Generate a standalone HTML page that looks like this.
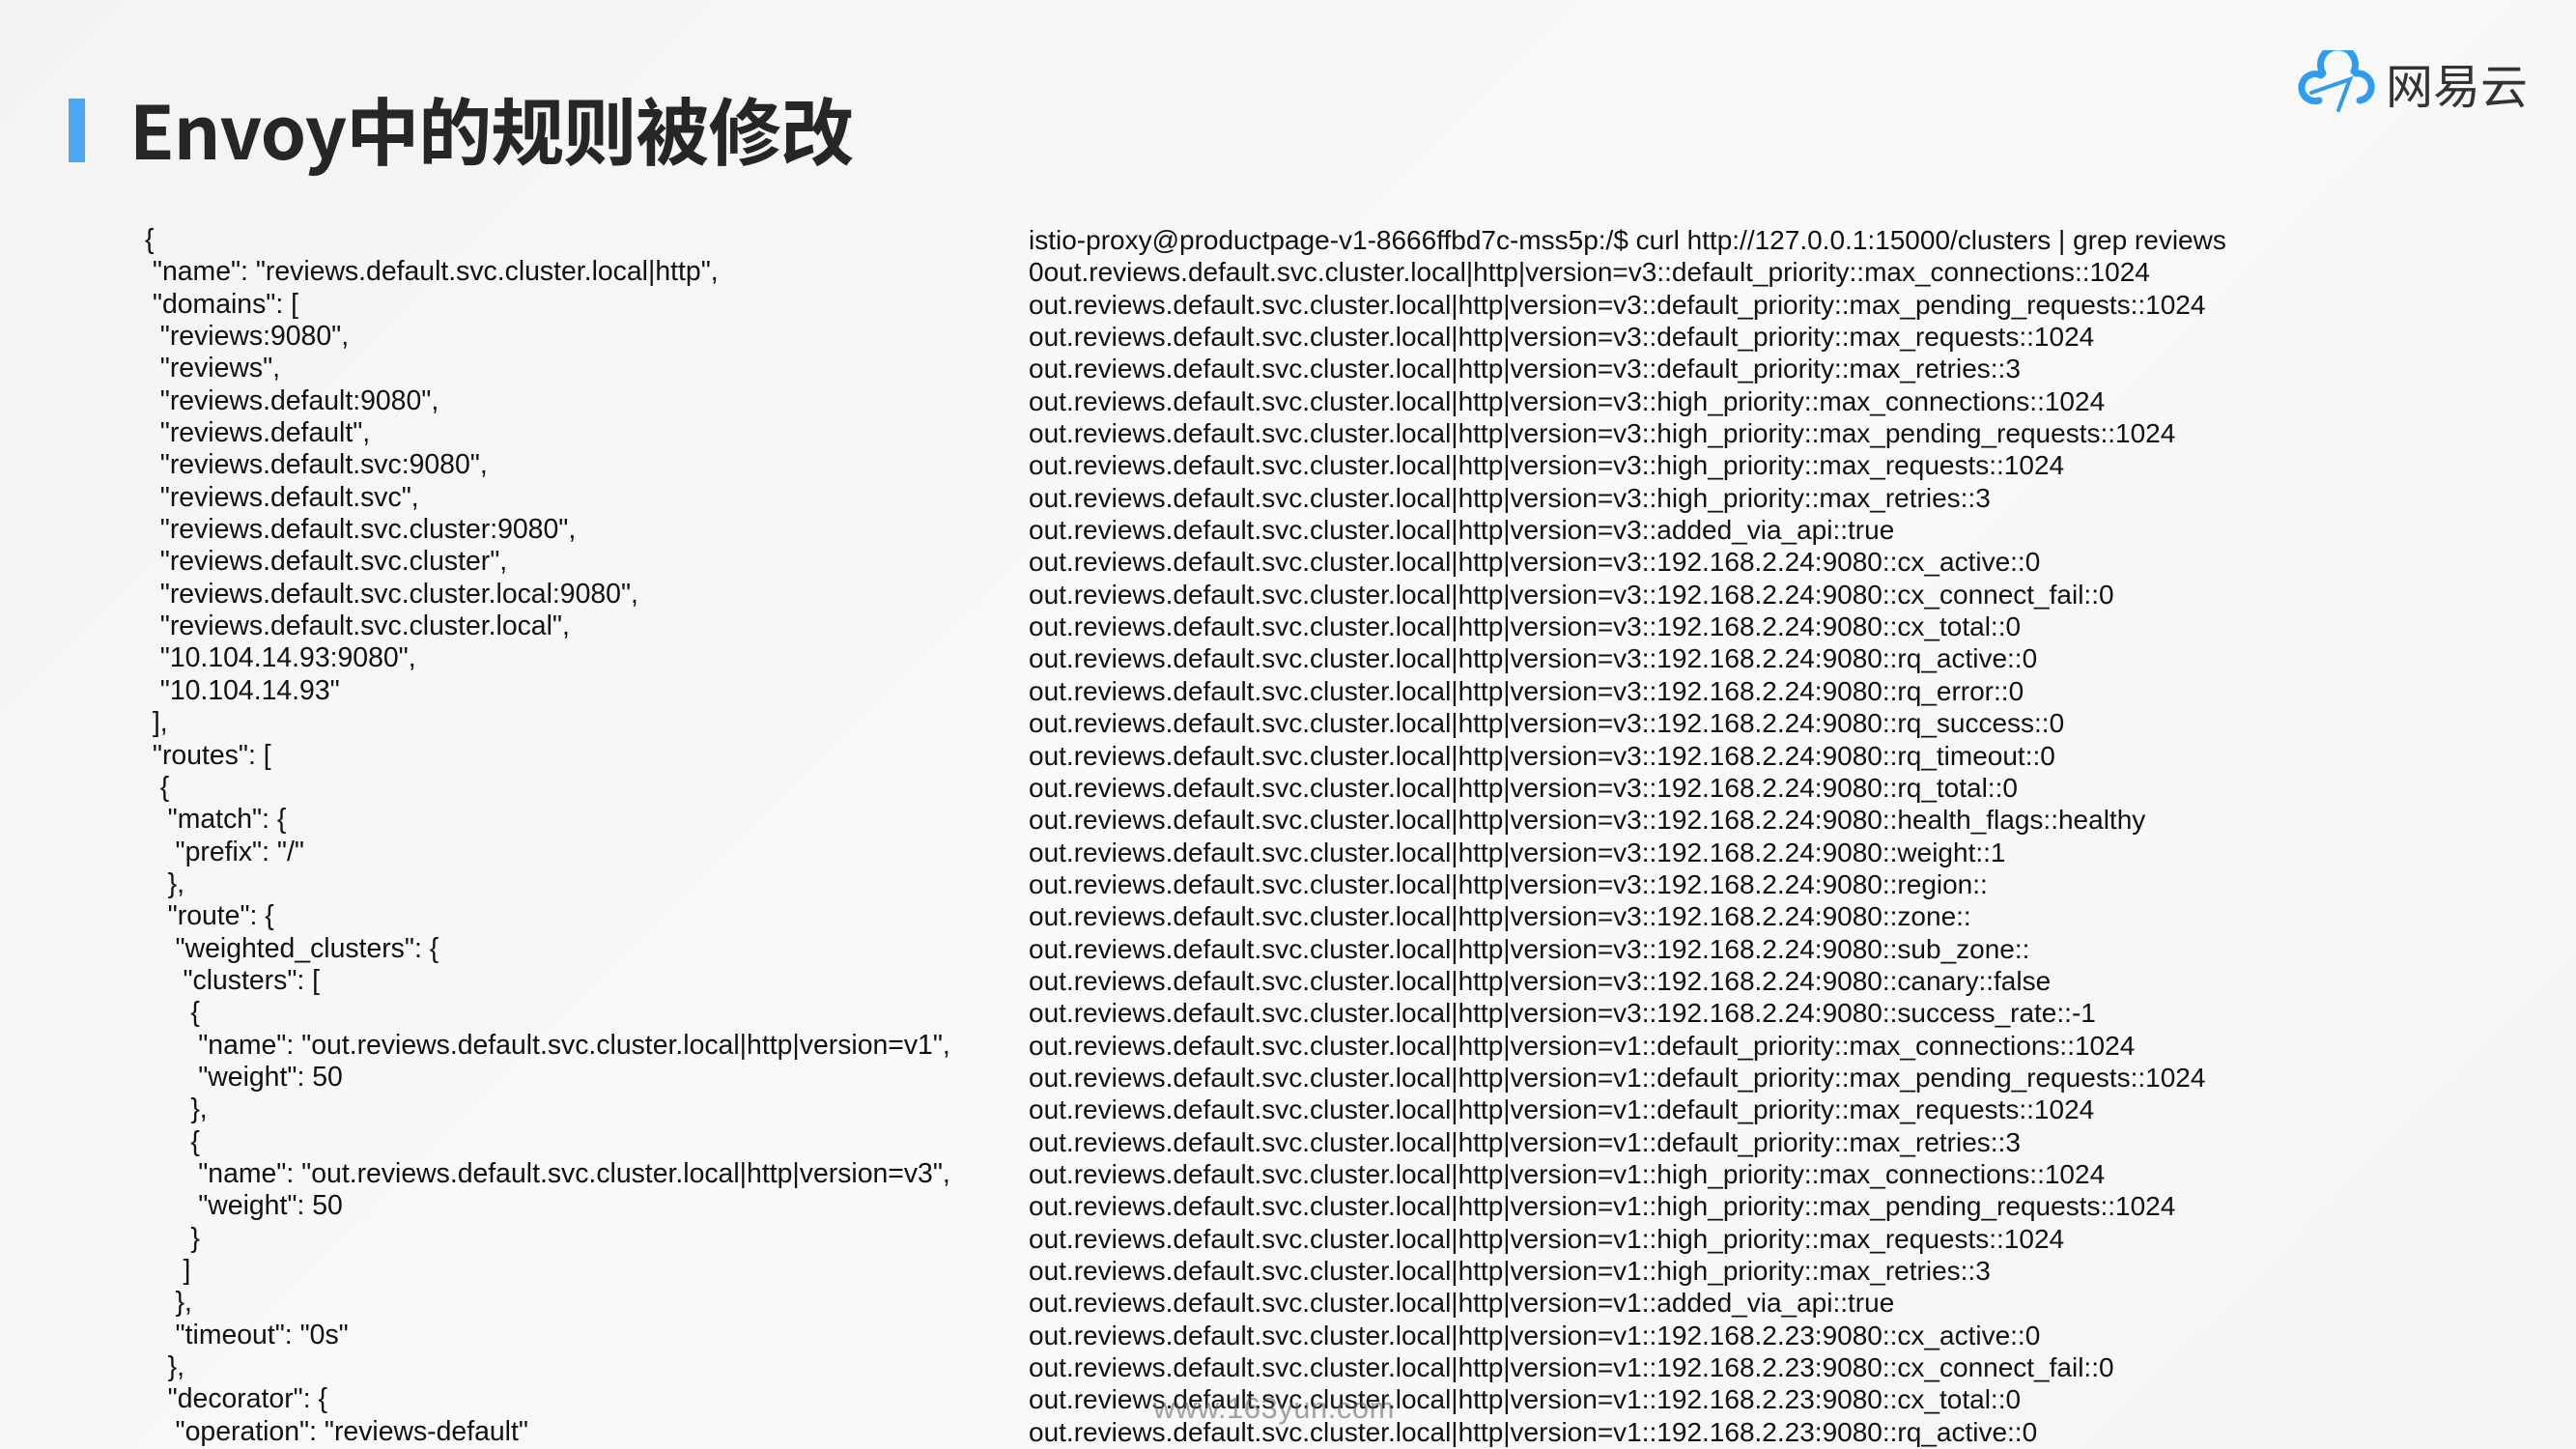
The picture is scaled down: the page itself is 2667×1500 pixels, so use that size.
<!DOCTYPE html>
<html><head><meta charset="utf-8"><style>
html,body{margin:0;padding:0}
body{width:2667px;height:1500px;overflow:hidden;position:relative;background:linear-gradient(135deg,#f3f3f3 0%,#fafafa 50%,#f4f4f4 100%);font-family:"Liberation Sans","Noto Sans CJK SC",sans-serif;color:#111}
.bar{position:absolute;left:71px;top:102px;width:17px;height:66px;background:#4ea7f5}
.title{position:absolute;left:134px;top:82px;font-size:76px;font-weight:bold;font-family:"Noto Sans CJK SC",sans-serif;color:#262626;line-height:100px;letter-spacing:-1px}
.left{position:absolute;left:150px;top:232px;font-size:28.4px;line-height:33.35px;white-space:pre}
.left div{height:33.35px}
.right{position:absolute;left:1065px;top:232px;font-size:28px;line-height:33.35px;white-space:pre}
.right div{height:33.35px}
.wm{position:absolute;left:1194px;top:1440px;font-size:31px;color:rgba(90,90,90,0.55);letter-spacing:0.5px}
.logo{position:absolute;left:2375px;top:52px}
.logotext{position:absolute;left:2470px;top:52px;font-size:49px;font-family:"Noto Sans CJK SC",sans-serif;color:#333;line-height:70px}
</style></head><body>
<div class="bar"></div>
<div class="title">Envoy中的规则被修改</div>
<svg class="logo" width="95" height="70" viewBox="0 0 95 70">
<g fill="none" stroke="#2f9cf0" stroke-width="7" stroke-linecap="round">
<path d="M30 24 A18 18 0 1 1 62 22"/>
<path d="M28 26 A14 14 0 1 0 26 52"/>
<path d="M64 24 A14 14 0 1 1 68 52"/>
<path d="M18 44 L58 30 L46 62" stroke-width="4"/>
</g></svg>
<div class="logotext">网易云</div>
<div class="left"><div>{</div><div> "name": "reviews.default.svc.cluster.local|http",</div><div> "domains": [</div><div>  "reviews:9080",</div><div>  "reviews",</div><div>  "reviews.default:9080",</div><div>  "reviews.default",</div><div>  "reviews.default.svc:9080",</div><div>  "reviews.default.svc",</div><div>  "reviews.default.svc.cluster:9080",</div><div>  "reviews.default.svc.cluster",</div><div>  "reviews.default.svc.cluster.local:9080",</div><div>  "reviews.default.svc.cluster.local",</div><div>  "10.104.14.93:9080",</div><div>  "10.104.14.93"</div><div> ],</div><div> "routes": [</div><div>  {</div><div>   "match": {</div><div>    "prefix": "/"</div><div>   },</div><div>   "route": {</div><div>    "weighted_clusters": {</div><div>     "clusters": [</div><div>      {</div><div>       "name": "out.reviews.default.svc.cluster.local|http|version=v1",</div><div>       "weight": 50</div><div>      },</div><div>      {</div><div>       "name": "out.reviews.default.svc.cluster.local|http|version=v3",</div><div>       "weight": 50</div><div>      }</div><div>     ]</div><div>    },</div><div>    "timeout": "0s"</div><div>   },</div><div>   "decorator": {</div><div>    "operation": "reviews-default"</div></div>
<div class="right"><div>istio-proxy@productpage-v1-8666ffbd7c-mss5p:/$ curl http://127.0.0.1:15000/clusters | grep reviews</div><div>0out.reviews.default.svc.cluster.local|http|version=v3::default_priority::max_connections::1024</div><div>out.reviews.default.svc.cluster.local|http|version=v3::default_priority::max_pending_requests::1024</div><div>out.reviews.default.svc.cluster.local|http|version=v3::default_priority::max_requests::1024</div><div>out.reviews.default.svc.cluster.local|http|version=v3::default_priority::max_retries::3</div><div>out.reviews.default.svc.cluster.local|http|version=v3::high_priority::max_connections::1024</div><div>out.reviews.default.svc.cluster.local|http|version=v3::high_priority::max_pending_requests::1024</div><div>out.reviews.default.svc.cluster.local|http|version=v3::high_priority::max_requests::1024</div><div>out.reviews.default.svc.cluster.local|http|version=v3::high_priority::max_retries::3</div><div>out.reviews.default.svc.cluster.local|http|version=v3::added_via_api::true</div><div>out.reviews.default.svc.cluster.local|http|version=v3::192.168.2.24:9080::cx_active::0</div><div>out.reviews.default.svc.cluster.local|http|version=v3::192.168.2.24:9080::cx_connect_fail::0</div><div>out.reviews.default.svc.cluster.local|http|version=v3::192.168.2.24:9080::cx_total::0</div><div>out.reviews.default.svc.cluster.local|http|version=v3::192.168.2.24:9080::rq_active::0</div><div>out.reviews.default.svc.cluster.local|http|version=v3::192.168.2.24:9080::rq_error::0</div><div>out.reviews.default.svc.cluster.local|http|version=v3::192.168.2.24:9080::rq_success::0</div><div>out.reviews.default.svc.cluster.local|http|version=v3::192.168.2.24:9080::rq_timeout::0</div><div>out.reviews.default.svc.cluster.local|http|version=v3::192.168.2.24:9080::rq_total::0</div><div>out.reviews.default.svc.cluster.local|http|version=v3::192.168.2.24:9080::health_flags::healthy</div><div>out.reviews.default.svc.cluster.local|http|version=v3::192.168.2.24:9080::weight::1</div><div>out.reviews.default.svc.cluster.local|http|version=v3::192.168.2.24:9080::region::</div><div>out.reviews.default.svc.cluster.local|http|version=v3::192.168.2.24:9080::zone::</div><div>out.reviews.default.svc.cluster.local|http|version=v3::192.168.2.24:9080::sub_zone::</div><div>out.reviews.default.svc.cluster.local|http|version=v3::192.168.2.24:9080::canary::false</div><div>out.reviews.default.svc.cluster.local|http|version=v3::192.168.2.24:9080::success_rate::-1</div><div>out.reviews.default.svc.cluster.local|http|version=v1::default_priority::max_connections::1024</div><div>out.reviews.default.svc.cluster.local|http|version=v1::default_priority::max_pending_requests::1024</div><div>out.reviews.default.svc.cluster.local|http|version=v1::default_priority::max_requests::1024</div><div>out.reviews.default.svc.cluster.local|http|version=v1::default_priority::max_retries::3</div><div>out.reviews.default.svc.cluster.local|http|version=v1::high_priority::max_connections::1024</div><div>out.reviews.default.svc.cluster.local|http|version=v1::high_priority::max_pending_requests::1024</div><div>out.reviews.default.svc.cluster.local|http|version=v1::high_priority::max_requests::1024</div><div>out.reviews.default.svc.cluster.local|http|version=v1::high_priority::max_retries::3</div><div>out.reviews.default.svc.cluster.local|http|version=v1::added_via_api::true</div><div>out.reviews.default.svc.cluster.local|http|version=v1::192.168.2.23:9080::cx_active::0</div><div>out.reviews.default.svc.cluster.local|http|version=v1::192.168.2.23:9080::cx_connect_fail::0</div><div>out.reviews.default.svc.cluster.local|http|version=v1::192.168.2.23:9080::cx_total::0</div><div>out.reviews.default.svc.cluster.local|http|version=v1::192.168.2.23:9080::rq_active::0</div></div>
<div class="wm">www.163yun.com</div>
</body></html>
